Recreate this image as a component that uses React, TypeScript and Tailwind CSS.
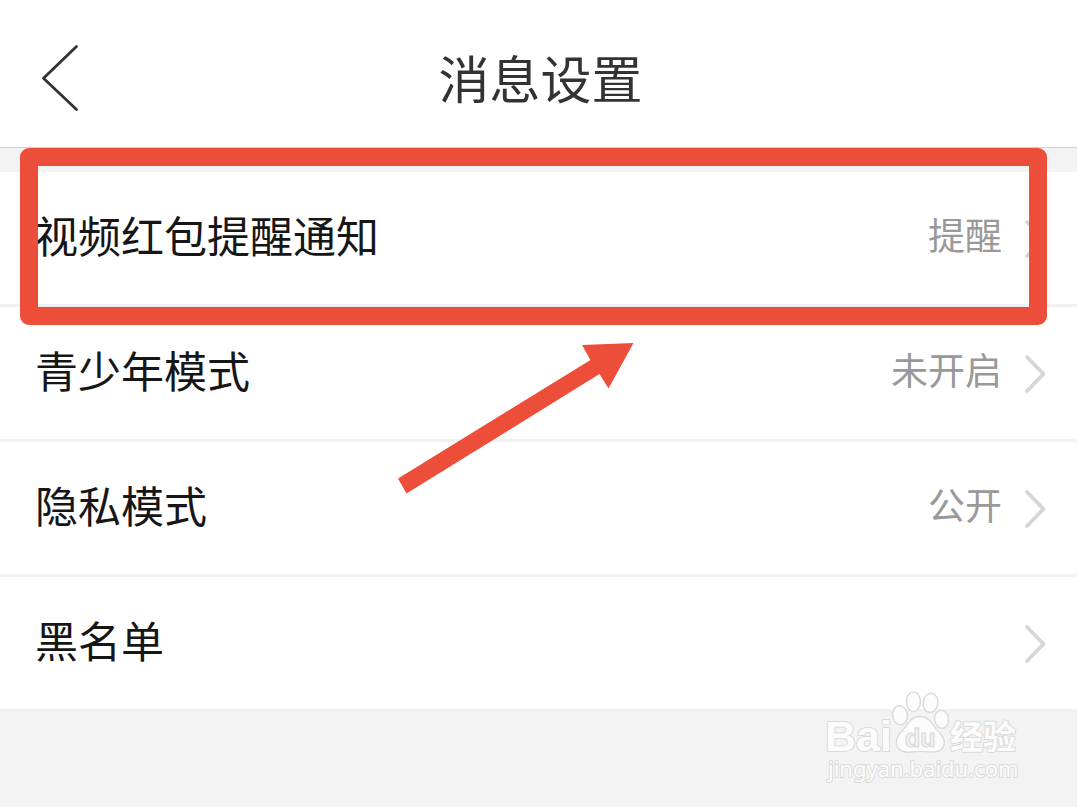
type SettingRow = { label: string; value?: string };

const rows: SettingRow[] = [
  { label: "视频红包提醒通知", value: "提醒" },
  { label: "青少年模式", value: "未开启" },
  { label: "隐私模式", value: "公开" },
  { label: "黑名单" },
];

function BackIcon() {
  return (
    <svg width="40" height="72" viewBox="0 0 40 72" fill="none" aria-hidden="true">
      <path
        d="M36.5 4.5 L3.5 36.2 L36.5 67.5"
        stroke="#333333"
        strokeWidth="2.8"
        strokeLinecap="round"
        strokeLinejoin="round"
      />
    </svg>
  );
}

function ChevronIcon() {
  return (
    <svg width="24" height="40" viewBox="0 0 24 40" fill="none" aria-hidden="true">
      <path
        d="M4 3 L20.5 20 L4 37"
        stroke="#d6d6d6"
        strokeWidth="3.8"
        strokeLinecap="round"
        strokeLinejoin="round"
      />
    </svg>
  );
}

function Arrow() {
  return (
    <svg width="240" height="156" viewBox="0 0 240 156" aria-hidden="true">
      <path
        d="M235.5 3 L184 5 L192.5 20 L0 138.5 L8.5 153.5 L201.5 34 L210.5 48.5 Z"
        fill="#ed4e3a"
      />
    </svg>
  );
}

function Watermark() {
  return (
    <svg
      width="204"
      height="104"
      viewBox="0 0 204 104"
      role="img"
      aria-label="Bai du 经验 jingyan.baidu.com"
      fill="#fcfcfc"
      stroke="#dadada"
      strokeWidth="1.4"
      strokeLinejoin="round"
    >
      <g className="font-['Liberation_Sans',sans-serif] font-bold" paintOrder="stroke" strokeWidth="2">
        <text x="5" y="66" fontSize="43">
          Bai
        </text>
      </g>
      <ellipse cx="80" cy="30.3" rx="7.3" ry="9.6" transform="rotate(-8 80 30.3)" />
      <ellipse cx="93.4" cy="16.7" rx="7" ry="9.8" />
      <ellipse cx="110.5" cy="17.8" rx="7.4" ry="9.6" transform="rotate(8 110.5 17.8)" />
      <ellipse cx="121.6" cy="34.3" rx="7" ry="9" transform="rotate(-8 121.6 34.3)" />
      <path d="M100 31.5 C108 31.5 111.5 37.5 115 42.5 C119 48 124.5 50.5 124.3 57.5 C124 65 117.5 67.5 111 67 C104 66.2 98 66 91 67 C83 68 76.5 65 76.3 57 C76.2 50.5 81 47.5 85 42.5 C88.5 37.5 92 31.5 100 31.5 Z" />
      <text
        x="85"
        y="62"
        fontSize="25"
        fill="#f3f3f3"
        strokeWidth="1.2"
        className="font-['Liberation_Sans',sans-serif] font-bold"
      >
        du
      </text>
      <g className="font-['Noto_Sans_CJK_SC',sans-serif] font-bold" paintOrder="stroke" strokeWidth="2">
        <text x="130" y="64" fontSize="33">
          经验
        </text>
      </g>
      <text
        x="8"
        y="92"
        fontSize="22"
        paintOrder="stroke"
        strokeWidth="2"
        className="font-['Noto_Sans',sans-serif]"
      >
        jingyan.baidu.com
      </text>
    </svg>
  );
}

export default function App() {
  return (
    <div className="relative flex min-h-screen flex-col overflow-hidden bg-[#f3f3f3] font-['Noto_Sans_CJK_SC',sans-serif]">
      <header className="grid h-[148px] grid-cols-[1fr_auto_1fr] items-center border-b border-[#cfcfcf] bg-white pt-2 pr-9 pl-10">
        <button type="button" aria-label="返回" className="justify-self-start">
          <BackIcon />
        </button>
        <h1 className="pb-[2px] text-[51px] leading-[72px] text-[#333333]">消息设置</h1>
      </header>

      <main className="relative pt-6">
        <ul className="bg-white">
          {rows.map((row) => (
            <li key={row.label}>
              <button
                type="button"
                className="flex h-[135px] w-full items-center border-b-[3px] border-[#f1f1f1] pt-[2px] pr-[30px] pl-[35px] text-left"
              >
                <span className="flex-1 pb-[10px] text-[43px] leading-[60px] text-[#161616]">{row.label}</span>
                <span className="mr-[21px] pb-[10px] text-[37px] leading-[60px] text-[#999999]">{row.value}</span>
                <ChevronIcon />
              </button>
            </li>
          ))}
        </ul>
        <div className="pointer-events-none absolute top-0 right-[30px] left-5 h-[177px] rounded-[9px] border-[18px] border-[#ed4e3a]" />
        <div className="pointer-events-none absolute top-[192px] left-1/2 -ml-[141px]">
          <Arrow />
        </div>
      </main>

      <div className="pointer-events-none absolute right-[53px] bottom-[18px]">
        <Watermark />
      </div>
    </div>
  );
}
